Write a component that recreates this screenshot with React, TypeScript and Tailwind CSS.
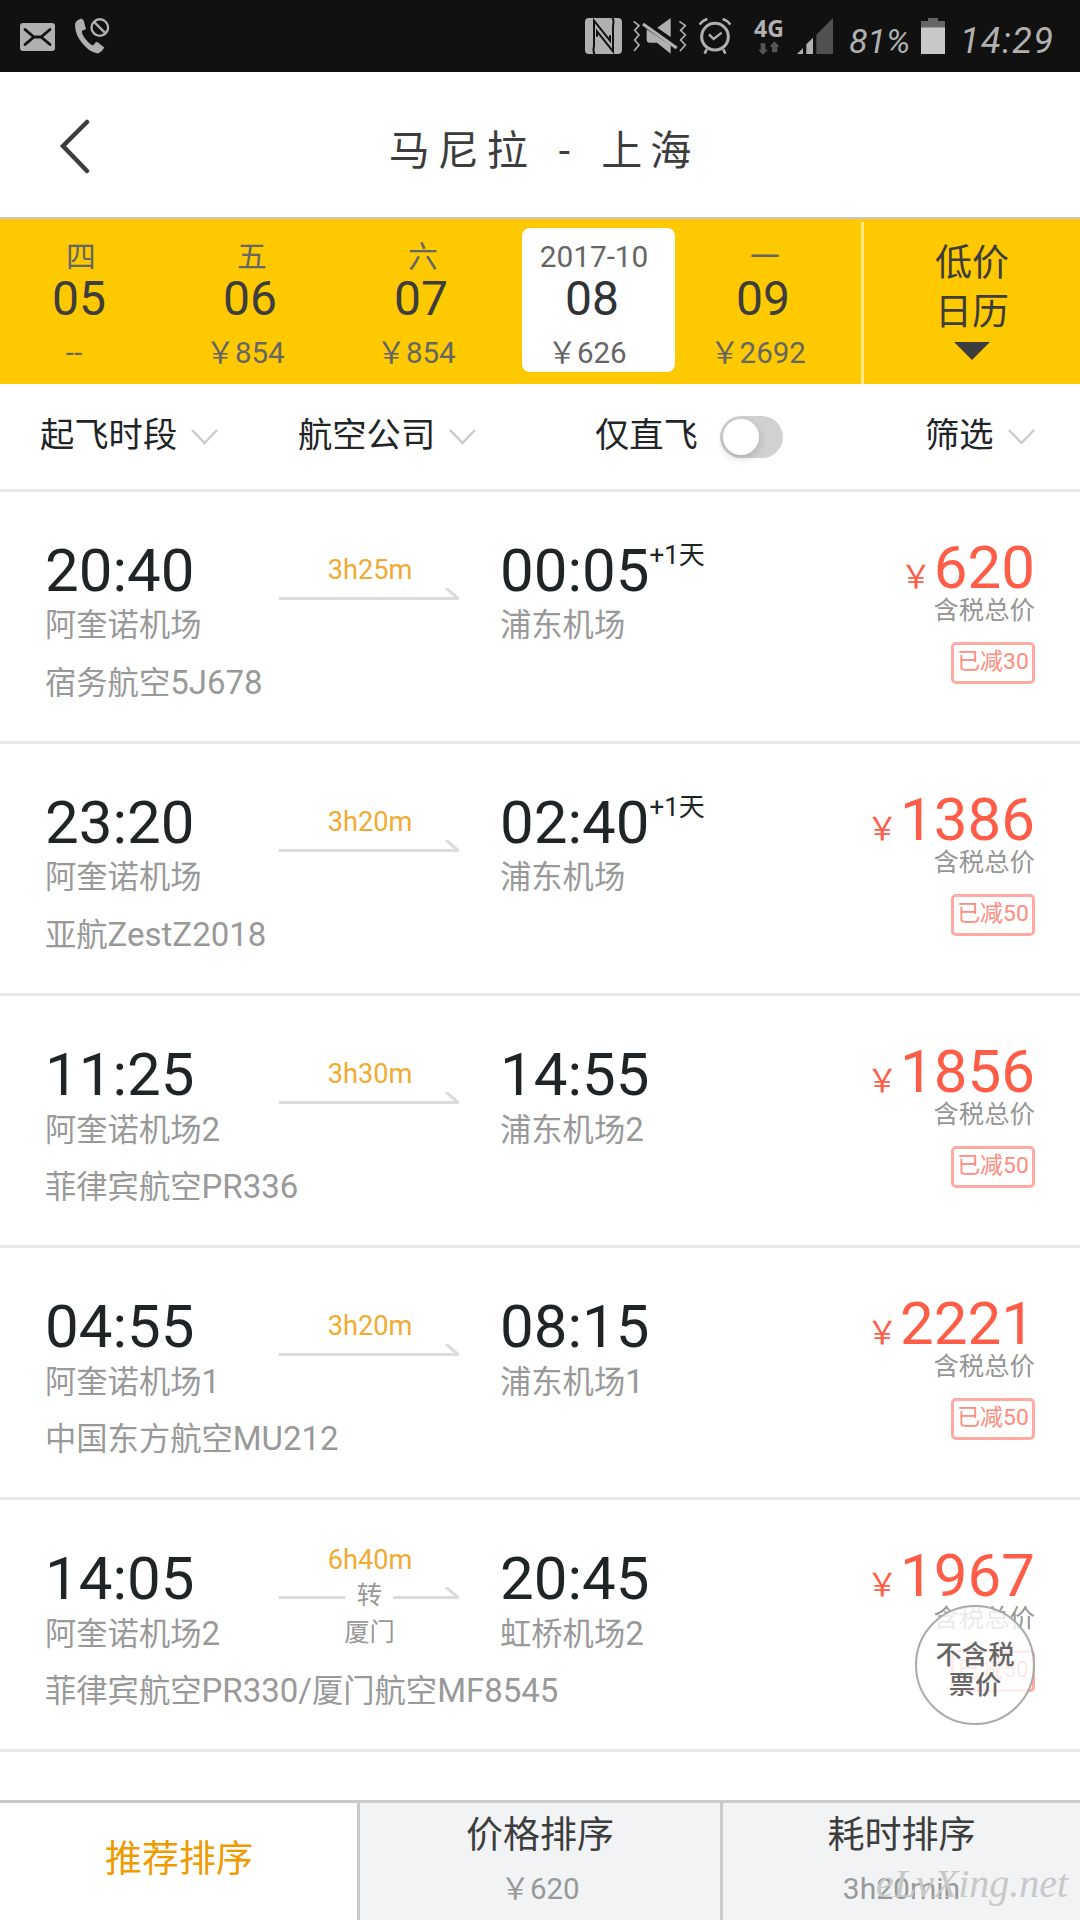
import React from 'react';

const days = [
  { week: '四', day: '05', price: '--' },
  { week: '五', day: '06', price: '¥854' },
  { week: '六', day: '07', price: '¥854' },
  { week: '2017-10', day: '08', price: '¥626', active: true },
  { week: '一', day: '09', price: '¥2692' },
];

const flights = [
  { dep: '20:40', from: '阿奎诺机场', arr: '00:05', to: '浦东机场', nextDay: true, duration: '3h25m', airline: '宿务航空5J678', price: '620', off: '已减30' },
  { dep: '23:20', from: '阿奎诺机场', arr: '02:40', to: '浦东机场', nextDay: true, duration: '3h20m', airline: '亚航ZestZ2018', price: '1386', off: '已减50' },
  { dep: '11:25', from: '阿奎诺机场2', arr: '14:55', to: '浦东机场2', duration: '3h30m', airline: '菲律宾航空PR336', price: '1856', off: '已减50' },
  { dep: '04:55', from: '阿奎诺机场1', arr: '08:15', to: '浦东机场1', duration: '3h20m', airline: '中国东方航空MU212', price: '2221', off: '已减50' },
  { dep: '14:05', from: '阿奎诺机场2', arr: '20:45', to: '虹桥机场2', duration: '6h40m', via: '厦门', airline: '菲律宾航空PR330/厦门航空MF8545', price: '1967', off: '已减50' },
];

type Flight = (typeof flights)[number];

function StatusBar() {
  return (
    <div className="flex h-[72px] shrink-0 items-start bg-[#111111] text-[#b0b0b0]">
      <svg className="mt-[23px] ml-5 h-[28px] w-[35px]" viewBox="0 0 35 28">
        <rect width="35" height="28" rx="3" fill="#b0b0b0" />
        <path d="M5 6.5L14 14h7l9-7.5M5 21.5L14 14h7l9 7.5" fill="none" stroke="#111" strokeWidth="2.8" strokeLinecap="round" />
      </svg>
      <svg className="mt-[18px] ml-5 h-[36px] w-[35px]" viewBox="75 18 35 36">
        <path
          d="M75.2 23.5Q77 19.500 81.600 18.600L83.700 20.500L86 29.300L82 30.700Q81.800 33 82.600 34.500Q84.500 38.700 87.800 41.700Q90 44 92.300 45.300L94 44.800Q94.500 42 97 41.700L104.300 47.500Q102.500 51.500 98 53.500Q93 53 88.500 49.500Q81 43 77.500 36Q74.500 29 75.200 23.500Z"
          fill="#b0b0b0"
        />
        <circle cx="99.800" cy="27.600" r="8.300" fill="none" stroke="#b0b0b0" strokeWidth="2.400" />
        <path d="M94 21.800l11.600 11.600" stroke="#b0b0b0" strokeWidth="2.400" />
      </svg>

      <svg className="mt-[18px] ml-[475px] h-9 w-[37px]" viewBox="15 24 111 108">
        <rect x="15" y="24" width="111" height="108" rx="12" fill="#b0b0b0" />
        <g fill="none" stroke="#111" strokeWidth="6">
          <path d="M45 135Q38 126 42 108V32L90 92V76" />
          <path d="M96 21Q103 30 99 48V124L51 64V80" />
        </g>
      </svg>
      <svg className="mt-[18px] ml-[11px] h-9 w-[54px]" viewBox="160 24 162 108">
        <g fill="none" stroke="#b0b0b0" strokeWidth="5">
          <path d="M162 34l16 13l-13 14l13 14l-13 15l13 15l-15 18" />
          <path d="M299 34l18 13l-14 14l14 14l-14 15l14 15l-16 18" />
        </g>
        <path d="M273 24V81L233 53Z" fill="#b0b0b0" />
        <path d="M201 58L273 106V131L232 98H208Q201 97 201 90Z" fill="#b0b0b0" />
        <path d="M190 42L291 114" stroke="#b0b0b0" strokeWidth="10" />
      </svg>
      <svg className="mt-[18px] ml-3 h-9 w-8" viewBox="357 24 96 108">
        <g fill="none" stroke="#b0b0b0">
          <circle cx="405" cy="80" r="40" strokeWidth="9" />
          <path d="M387 73l14 14l24-19" strokeWidth="7" />
          <path d="M359 44Q366 32 382 27M451 44Q444 32 428 27M380 118l-6 13M430 118l6 13" strokeWidth="8" />
        </g>
      </svg>
      <div className="mt-[17px] ml-6 flex w-7 flex-col items-center">
        <span className="font-['Noto_Sans'] text-[23px] leading-[22px] font-bold">4G</span>
        <svg className="mt-[2px] h-[14px] w-[22px]" viewBox="533 91 66 42">
          <path d="M541 98h14v19h8l-15 15l-14-15h7zM575 125v-17h-7l14-16l16 16h-7v17z" fill="#555" />
        </svg>
      </div>
      <svg className="mt-[18px] ml-[14px] h-9 w-9" viewBox="650 24 108 108">
        <path d="M650 132h18v-18zM678 132v-29l20-20v49z" fill="#b0b0b0" />
        <path d="M708 132V74l50-50v108z" fill="#505050" />
      </svg>
      <span className="mt-[18px] ml-[16px] w-[62px] text-[34px] leading-[46px] italic">81%</span>
      <svg className="mt-[18px] ml-[10px] h-9 w-6" viewBox="0 0 24 36">
        <path d="M7 0h10v3h7v7H0V3h7z" fill="#666" />
        <path d="M0 9.500h24V36H0z" fill="#c8c8c8" />
      </svg>
      <span className="mt-[18px] ml-[15px] text-[36px] leading-[46px] tracking-[1.5px] italic">14:29</span>
    </div>
  );
}

function Header() {
  return (
    <header className="relative flex h-[147px] shrink-0 items-center justify-center border-b-2 border-[#c8c8cc] bg-white">
      <svg className="absolute top-[46px] left-[58px] h-[56px] w-[34px]" viewBox="0 0 34 56" fill="none" stroke="#3d3d3d" strokeWidth="4.5">
        <path d="M29 4L5 28l24 25" strokeLinecap="round" />
      </svg>
      <h1 className="pt-3 pl-[8px] text-[41px] leading-[60px] tracking-[8px] whitespace-pre text-[#3d3d3d] [word-spacing:5px]">马尼拉 - 上海</h1>
    </header>
  );
}

// The yen sign is full width and takes the CJK font.
function Price({ value }: { value: string }) {
  return <>{value.replace('¥', '￥')}</>;
}

// Latin letters and digits are set slightly larger than the Chinese around them.
function Mixed({ text }: { text: string }) {
  return (
    <>
      {text.split(/([A-Za-z0-9/]+)/).map((part, i) => (
        <span key={i} className={i % 2 ? 'text-[33px]' : ''}>
          {part}
        </span>
      ))}
    </>
  );
}

function DateStrip() {
  return (
    <div className="flex h-[165px] shrink-0 bg-[#ffc900]">
      <div className="flex w-[861px] gap-[18px] pt-[9px] pl-[9px]">
        {days.map((d) => (
          <div
            key={d.day}
            className={
              d.active
                ? 'flex h-36 w-[153px] flex-col items-center rounded-lg bg-white pt-4 pr-[13px] text-[#2f3335]'
                : 'flex h-36 w-[153px] flex-col items-center pt-4 pr-[13px] text-[#3d3d3d]'
            }
          >
            <span className="pl-[4px] text-[29.800px] leading-[26px] whitespace-nowrap text-[#666]">{d.week}</span>
            <span className="text-[48px] leading-[58px]">{d.day}</span>
            <span className="mt-[6px] pr-[10px] text-[29.500px] leading-[38px] whitespace-nowrap text-[#666]">
              <Price value={d.price} />
            </span>
          </div>
        ))}
      </div>
      <div className="mt-[3px] w-[3px] bg-[#ffe68a]" />
      <div className="flex flex-1 flex-col items-center pt-[20px] text-[37px] leading-[49px] text-[#3d3d3d]">
        <span>低价</span>
        <span>日历</span>
        <svg className="mt-[5px] h-[18px] w-9" viewBox="0 0 36 18">
          <path d="M0 0h36L18 18z" fill="#3d3d3d" />
        </svg>
      </div>
    </div>
  );
}

function Chevron() {
  return (
    <svg className="ml-[14px] h-4 w-[27px]" viewBox="0 0 27 16" fill="none" stroke="#cacaca" strokeWidth="2.400">
      <path d="M1 1l12.500 13L26 1" />
    </svg>
  );
}

function Filters() {
  return (
    <div className="flex h-[108px] shrink-0 items-center border-b-[3px] border-[#e8e8e8] text-[34.300px] leading-[50px] text-[#1f2427]">
      <div className="flex w-[298px] items-center pl-10">
        <span className="-mt-1">起飞时段</span>
        <Chevron />
      </div>
      <div className="flex w-[257px] items-center">
        <span className="-mt-1">航空公司</span>
        <Chevron />
      </div>
      <div className="flex w-[330px] items-center pl-10">
        <span className="-mt-1">仅直飞</span>
        <div className="ml-[22px] h-[42px] w-[63px] rounded-full bg-[#d0d2d2] p-[3px]">
          <div className="h-9 w-9 rounded-full bg-white shadow-[0_3px_8px_rgba(0,0,0,0.18)]" />
        </div>
      </div>
      <div className="flex items-center pl-10">
        <span className="-mt-1">筛选</span>
        <Chevron />
      </div>
    </div>
  );
}

function Route({ flight }: { flight: Flight }) {
  if (flight.via) {
    return (
      <div className="flex w-[180px] shrink-0 flex-col items-center pt-[42px] text-[25.300px] text-[#999]">
        <span className="pl-[2px] text-[27.200px] leading-9 text-[#f3aa32]">{flight.duration}</span>
        <div className="flex h-9 w-full justify-between">
          <svg className="mt-[9px] h-3 w-[66px]" viewBox="0 0 66 12">
            <path d="M0 10.500h66" stroke="#dcdcdc" strokeWidth="3" />
          </svg>
          <span className="pl-[1px] leading-9">转</span>
          <svg className="mt-[9px] h-3 w-[66px]" viewBox="0 0 66 12" fill="none" stroke="#dcdcdc" strokeWidth="3">
            <path d="M0 10.500h66M53 0l11.500 10" />
          </svg>
        </div>
        <span className="pl-[1px] leading-[38px]">{flight.via}</span>
      </div>
    );
  }
  return (
    <div className="flex w-[180px] shrink-0 flex-col items-center pt-[60px]">
      <span className="pl-[2px] text-[27.200px] leading-9 text-[#f3aa32]">{flight.duration}</span>
      <svg className="h-3 w-[180px]" viewBox="0 0 180 12" fill="none" stroke="#dcdcdc" strokeWidth="3">
        <path d="M0 10.500h180M167 0l11.500 10" />
      </svg>
    </div>
  );
}

function FlightRow({ flight }: { flight: Flight }) {
  return (
    <div className="flex h-[252px] shrink-0 border-b-[3px] border-[#e8e8e8] px-[45px] whitespace-nowrap">
      <div className="w-[234px] shrink-0 pt-[49px] text-[31.300px] text-[#999]">
        <div className="text-[60px] leading-[60px] text-[#1f2427]">{flight.dep}</div>
        <div className="h-[50px] leading-[50px]">
          <Mixed text={flight.from} />
        </div>
        <div className="mt-3 leading-10">
          <Mixed text={flight.airline} />
        </div>
      </div>
      <Route flight={flight} />
      <div className="ml-[41px] pt-[49px] text-[31.300px] text-[#999]">
        <div className="flex text-[60px] leading-[60px] text-[#1f2427]">
          {flight.arr}
          {flight.nextDay && <span className="text-[26px] leading-[28px]">+1天</span>}
        </div>
        <div className="h-[50px] leading-[50px]">
          <Mixed text={flight.to} />
        </div>
      </div>
      <div className="ml-auto flex flex-col items-end pt-[46px]">
        <div className="h-[60px] text-[60px] leading-[60px] text-[#ff5d47]">
          <span className="mr-[2px] text-[31.500px] leading-[30px]">￥</span>
          {flight.price}
        </div>
        <div className="text-[25.400px] leading-6 text-[#969696]">含税总价</div>
        <div className="mt-5 h-[42px] w-[84px] rounded-[5px] border-[3px] border-[#ffaaa2] text-center text-[22.900px] leading-[34px] text-[#ff8c7e]">
          {flight.off}
        </div>
      </div>
    </div>
  );
}

function SortBar() {
  return (
    <div className="flex h-[120px] shrink-0 border-t-[3px] border-[#cacaca] bg-[#f1f3f5] text-center text-[37px] text-[#3d3d3d]">
      <div className="w-[357px] bg-white pl-[1px] leading-[114px] text-[#f09a00]">推荐排序</div>
      <div className="w-[366px] border-x-[3px] border-[#cacaca] pt-[8px]">
        <div className="leading-[50px]">价格排序</div>
        <div className="text-[29.500px] leading-[56px] text-[#999]">
          <Price value="¥620" />
        </div>
      </div>
      <div className="flex-1 pt-[8px]">
        <div className="leading-[50px]">耗时排序</div>
        <div className="text-[30px] leading-[56px] text-[#999]">3h20min</div>
      </div>
    </div>
  );
}

export default function App() {
  return (
    <div className="relative flex h-[1920px] w-[1080px] flex-col overflow-hidden bg-white font-[Roboto,'Noto_Sans_CJK_SC',sans-serif]">
      <StatusBar />
      <Header />
      <DateStrip />
      <Filters />
      <div className="flex flex-1 flex-col overflow-hidden">
        {flights.map((f) => (
          <FlightRow key={f.dep} flight={f} />
        ))}
      </div>
      <SortBar />

      <button className="absolute top-[1605px] left-[915px] h-[120px] w-[120px] rounded-full border-2 border-[#aaa] bg-white/80 pt-[10px] text-[26.300px] leading-[30px] font-medium text-[#666]">
        不含税
        <br />
        票价
      </button>
      <span className="absolute top-[1862px] left-[876px] font-['Liberation_Serif'] text-[40px] leading-[44px] text-[#c8c8c8] italic">
        eLvXing.net
      </span>
    </div>
  );
}
